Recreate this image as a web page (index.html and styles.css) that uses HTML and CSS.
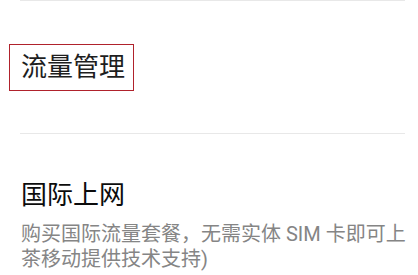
FILE: index.html
```html
<!DOCTYPE html>
<html lang="zh-CN">
<head>
    <meta charset="UTF-8">
    <meta name="viewport" content="width=device-width, initial-scale=1.0">
    <title>流量管理</title>
    <link rel="stylesheet" href="styles.css">
</head>
<body>
    <div class="divider"></div>

    <div class="section-head">
        <h2>流量管理</h2>
    </div>

    <div class="divider"></div>

    <!-- 国际上网 -->
    <div class="item">
        <h3>国际上网</h3>
        <p class="desc">
            <span>购买国际流量套餐，无需实体 SIM 卡即可上</span>
            <span>茶移动提供技术支持)</span>
        </p>
    </div>
</body>
</html>
```

FILE: styles.css
```css
body {
    margin: 0;
    padding: 0;
    background-color: #fff;
    font-family: 'Roboto', 'Noto Sans CJK SC', sans-serif;
    overflow: hidden;
}
.divider {
    height: 1px;
    background-color: #e8e8e8;
    margin: 0 13px 0 20px;
}
.section-head {
    display: flex;
    margin: 43px 0 42px 9px;
}
.section-head h2 {
    margin: 0;
    padding: 0 8px 0 11px;
    border: 1px solid #b0222c;
    font-size: 26px;
    font-weight: normal;
    line-height: 45px;
    color: #1e1e1e;
}
.item {
    padding: 44px 13px 0 21px;
}
.item h3 {
    margin: 0;
    font-size: 26px;
    font-weight: normal;
    line-height: 34px;
    color: #0c0c0c;
}
.desc {
    margin: 10px 0 0;
    font-size: 20px;
    line-height: 25px;
    color: #858585;
}
.desc span {
    display: block;
    white-space: nowrap;
}
```
